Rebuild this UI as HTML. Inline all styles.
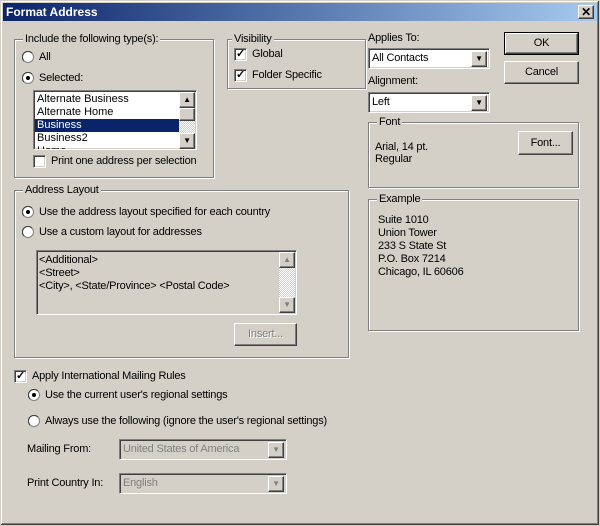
<!DOCTYPE html>
<html><head><style>
*{margin:0;padding:0;box-sizing:border-box}
body{width:600px;height:526px;background:#d4d0c8;font-family:"Liberation Sans",Arial,sans-serif;font-size:11px;letter-spacing:-0.2px;color:#000;position:relative;overflow:hidden}
.a{position:absolute;white-space:nowrap;line-height:13px}
.win{position:absolute;left:0;top:0;width:600px;height:526px;border:1px solid #d4d0c8;box-shadow:inset -1px -1px #404040,inset 1px 1px #fff,inset -2px -2px #808080}
.title{position:absolute;left:3px;top:3px;width:594px;height:18px;background:linear-gradient(90deg,#0a246a,#a6caf0);color:#fff;font-weight:bold;font-size:12px;line-height:18px;padding-left:3px;letter-spacing:0}
.grp{position:absolute;border:1px solid #808080;box-shadow:inset 1px 1px #fff,1px 1px #fff}
.lg{position:absolute;top:-7px;left:8px;background:#d4d0c8;padding:0 2px;line-height:13px}
.sunk{position:absolute;background:#fff;border:1px solid;border-color:#808080 #fff #fff #808080;box-shadow:inset 1px 1px #404040,inset -1px -1px #d4d0c8}
.btn{position:absolute;background:#d4d0c8;border:1px solid;border-color:#fff #404040 #404040 #fff;box-shadow:inset -1px -1px #808080;text-align:center;line-height:18px}
.cb{position:absolute;width:13px;height:13px}
.rd{position:absolute;width:12px;height:12px}
.dis{color:#808080}
.lb{font-size:11px;letter-spacing:0}
</style></head><body>
<div class="win"></div>
<div class="title">Format Address</div>
<div class="btn" style="left:578px;top:5px;width:16px;height:14px;line-height:12px;font-size:12px;font-weight:bold">✕</div>

<div class="grp" style="left:14px;top:39px;width:200px;height:139px"><span class="lg">Include the following type(s):</span></div>
<svg class="rd" style="left:22px;top:51px" viewBox="0 0 12 12"><circle cx="6" cy="6" r="5.5" fill="#fff" stroke="#808080"/><path d="M2 10A5 5 0 0 1 10 2" stroke="#404040" fill="none"/></svg>
<div class="a" style="left:39px;top:51px">All</div>
<svg class="rd" style="left:22px;top:72px" viewBox="0 0 12 12"><circle cx="6" cy="6" r="5.5" fill="#fff" stroke="#808080"/><path d="M2 10A5 5 0 0 1 10 2" stroke="#404040" fill="none"/><circle cx="6" cy="6" r="2" fill="#000"/></svg>
<div class="a" style="left:39px;top:72px">Selected:</div>
<div class="sunk" style="left:33px;top:90px;width:164px;height:60px;overflow:hidden">
<div class="a lb" style="left:3px;top:2px">Alternate Business</div>
<div class="a lb" style="left:3px;top:15px">Alternate Home</div>
<div class="a lb" style="left:1px;top:28px;width:144px;background:#0a246a;color:#fff;padding-left:2px">Business</div>
<div class="a lb" style="left:3px;top:41px">Business2</div>
<div class="a lb" style="left:3px;top:54px">Home</div>
<div style="position:absolute;left:145px;top:1px;width:16px;height:56px;background:repeating-conic-gradient(#fff 0 25%,#d4d0c8 0 50%) 0 0/2px 2px"></div>
<div class="btn" style="left:145px;top:1px;width:16px;height:16px;line-height:14px;font-size:8px">▲</div>
<div class="btn" style="left:145px;top:17px;width:16px;height:13px"></div>
<div class="btn" style="left:145px;top:42px;width:16px;height:16px;line-height:14px;font-size:8px">▼</div>
</div>
<div class="sunk cb" style="left:33px;top:155px"></div>
<div class="a" style="left:51px;top:155px">Print one address per selection</div>

<div class="grp" style="left:227px;top:39px;width:139px;height:50px"><span class="lg" style="left:4px">Visibility</span></div>
<div class="sunk cb" style="left:234px;top:48px;font-size:11px;line-height:11px;text-align:center;font-weight:bold">✓</div>
<div class="a" style="left:252px;top:48px">Global</div>
<div class="sunk cb" style="left:234px;top:69px;font-size:11px;line-height:11px;text-align:center;font-weight:bold">✓</div>
<div class="a" style="left:252px;top:69px">Folder Specific</div>

<div class="a" style="left:368px;top:32px">Applies To:</div>
<div class="sunk" style="left:368px;top:48px;width:122px;height:21px"><div class="a" style="left:3px;top:3px">All Contacts</div><div class="btn" style="right:2px;top:2px;width:16px;height:16px;line-height:14px;font-size:8px">▼</div></div>
<div class="a" style="left:368px;top:75px">Alignment:</div>
<div class="sunk" style="left:368px;top:92px;width:122px;height:21px"><div class="a" style="left:3px;top:3px">Left</div><div class="btn" style="right:2px;top:2px;width:16px;height:16px;line-height:14px;font-size:8px">▼</div></div>

<div style="position:absolute;left:504px;top:32px;width:75px;height:23px;border:1px solid #000"></div>
<div class="btn" style="left:505px;top:33px;width:73px;height:21px;line-height:19px">OK</div>
<div class="btn" style="left:504px;top:61px;width:75px;height:23px;line-height:21px">Cancel</div>

<div class="grp" style="left:368px;top:122px;width:211px;height:66px"><span class="lg" style="left:8px">Font</span></div>
<div class="a" style="left:375px;top:141px">Arial, 14 pt.</div>
<div class="a" style="left:375px;top:153px">Regular</div>
<div class="btn" style="left:518px;top:131px;width:55px;height:24px;line-height:22px">Font...</div>

<div class="grp" style="left:368px;top:199px;width:211px;height:132px"><span class="lg" style="left:8px">Example</span></div>
<div class="a" style="left:378px;top:214px">Suite 1010</div>
<div class="a" style="left:378px;top:227px">Union Tower</div>
<div class="a" style="left:378px;top:240px">233 S State St</div>
<div class="a" style="left:378px;top:253px">P.O. Box 7214</div>
<div class="a" style="left:378px;top:266px">Chicago, IL 60606</div>

<div class="grp" style="left:14px;top:190px;width:335px;height:168px"><span class="lg" style="left:8px">Address Layout</span></div>
<svg class="rd" style="left:22px;top:206px" viewBox="0 0 12 12"><circle cx="6" cy="6" r="5.5" fill="#fff" stroke="#808080"/><path d="M2 10A5 5 0 0 1 10 2" stroke="#404040" fill="none"/><circle cx="6" cy="6" r="2" fill="#000"/></svg>
<div class="a" style="left:39px;top:206px">Use the address layout specified for each country</div>
<svg class="rd" style="left:22px;top:226px" viewBox="0 0 12 12"><circle cx="6" cy="6" r="5.5" fill="#fff" stroke="#808080"/><path d="M2 10A5 5 0 0 1 10 2" stroke="#404040" fill="none"/></svg>
<div class="a" style="left:39px;top:226px">Use a custom layout for addresses</div>
<div class="sunk" style="left:36px;top:250px;width:261px;height:65px;background:#d4d0c8">
<div class="a" style="left:2px;top:3px">&lt;Additional&gt;</div>
<div class="a" style="left:2px;top:16px">&lt;Street&gt;</div>
<div class="a" style="left:2px;top:29px">&lt;City&gt;, &lt;State/Province&gt; &lt;Postal Code&gt;</div>
<div style="position:absolute;left:242px;top:1px;width:16px;height:61px;background:repeating-conic-gradient(#fff 0 25%,#d4d0c8 0 50%) 0 0/2px 2px"></div>
<div class="btn" style="left:242px;top:1px;width:16px;height:16px;line-height:14px;font-size:8px;color:#808080">▲</div>
<div class="btn" style="left:242px;top:46px;width:16px;height:16px;line-height:14px;font-size:8px;color:#808080">▼</div>
</div>
<div class="btn dis" style="left:234px;top:323px;width:63px;height:23px;line-height:21px;text-shadow:1px 1px #fff">Insert...</div>

<div class="sunk cb" style="left:14px;top:370px;font-size:11px;line-height:11px;text-align:center;font-weight:bold">✓</div>
<div class="a" style="left:32px;top:370px">Apply International Mailing Rules</div>
<svg class="rd" style="left:28px;top:389px" viewBox="0 0 12 12"><circle cx="6" cy="6" r="5.5" fill="#fff" stroke="#808080"/><path d="M2 10A5 5 0 0 1 10 2" stroke="#404040" fill="none"/><circle cx="6" cy="6" r="2" fill="#000"/></svg>
<div class="a" style="left:45px;top:389px">Use the current user's regional settings</div>
<svg class="rd" style="left:28px;top:415px" viewBox="0 0 12 12"><circle cx="6" cy="6" r="5.5" fill="#fff" stroke="#808080"/><path d="M2 10A5 5 0 0 1 10 2" stroke="#404040" fill="none"/></svg>
<div class="a" style="left:45px;top:415px">Always use the following (ignore the user's regional settings)</div>
<div class="a" style="left:27px;top:443px">Mailing From:</div>
<div class="sunk" style="left:119px;top:439px;width:168px;height:21px;background:#d4d0c8"><div class="a dis" style="left:3px;top:3px">United States of America</div><div class="btn" style="right:2px;top:2px;width:16px;height:16px;line-height:14px;font-size:8px;color:#808080">▼</div></div>
<div class="a" style="left:27px;top:477px">Print Country In:</div>
<div class="sunk" style="left:119px;top:473px;width:168px;height:21px;background:#d4d0c8"><div class="a dis" style="left:3px;top:3px">English</div><div class="btn" style="right:2px;top:2px;width:16px;height:16px;line-height:14px;font-size:8px;color:#808080">▼</div></div>
</body></html>
